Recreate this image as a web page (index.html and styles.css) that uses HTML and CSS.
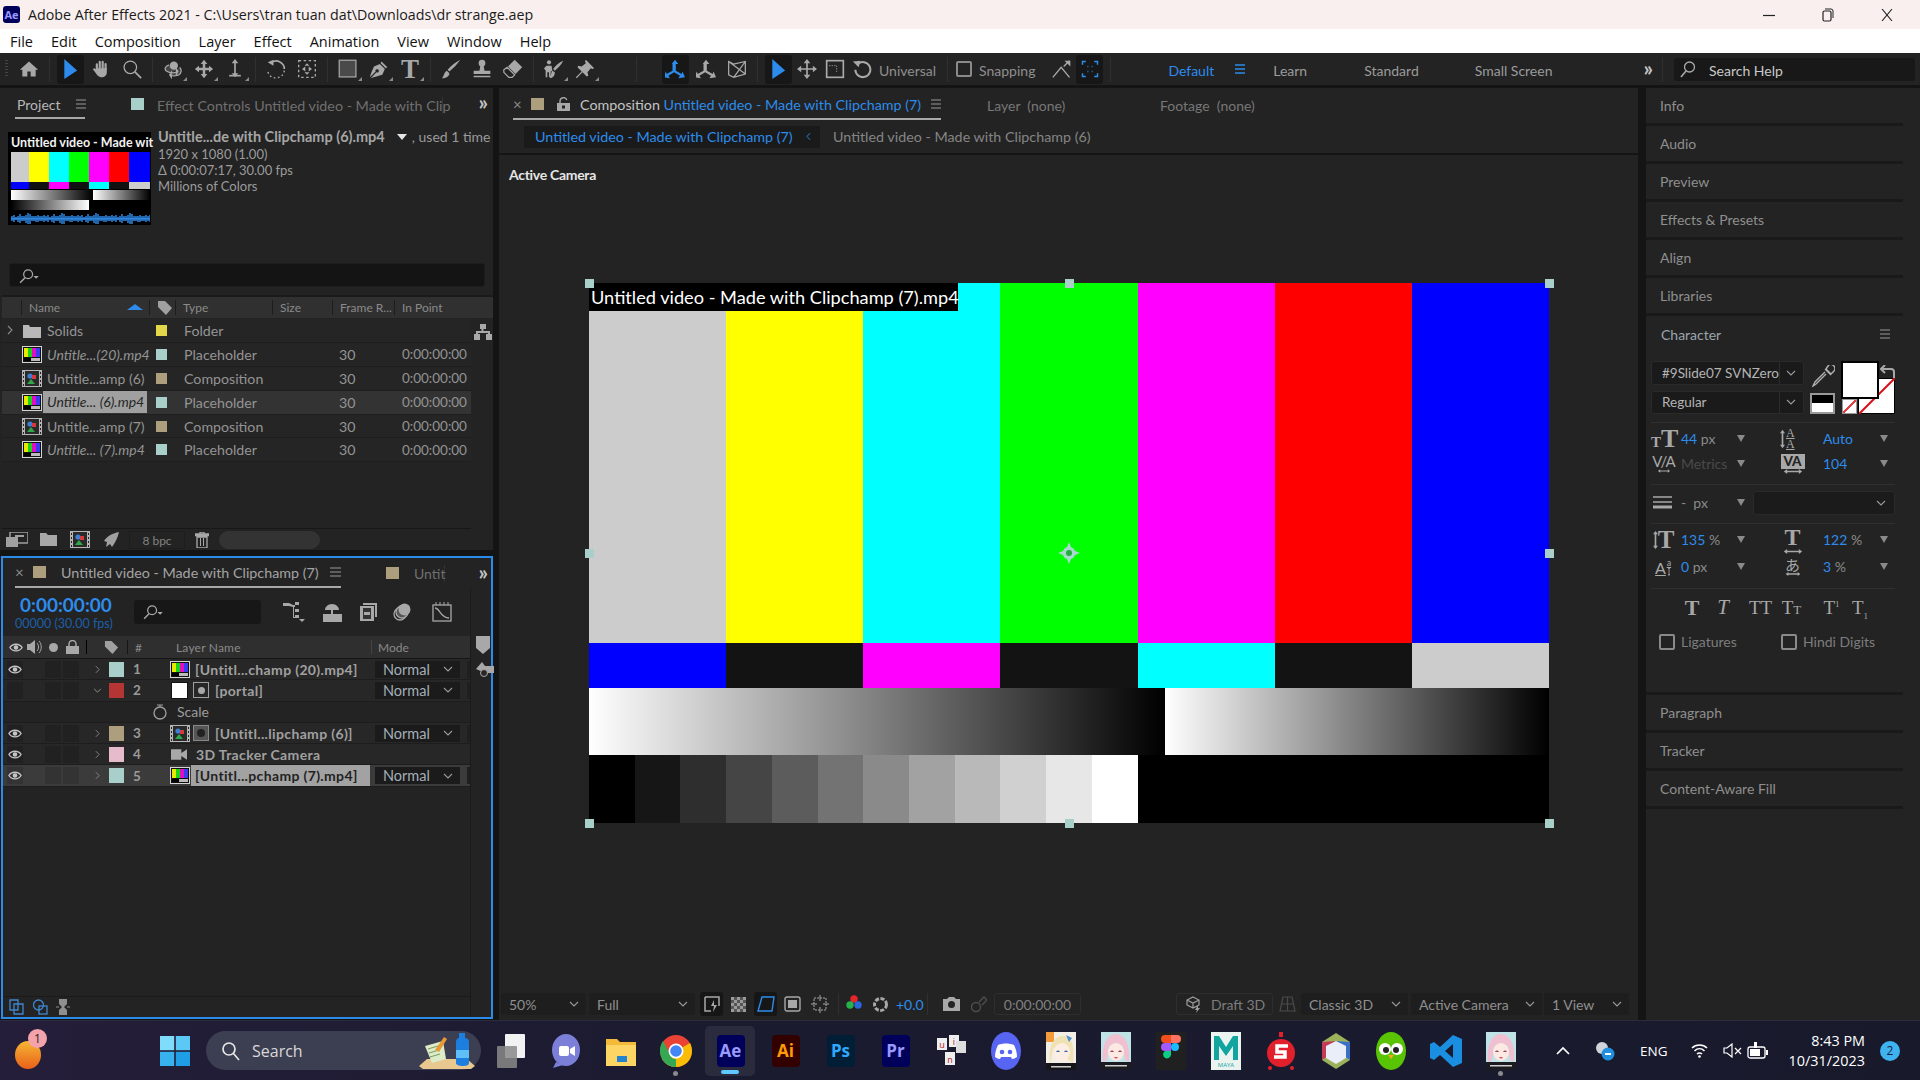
FILE: index.html
```html
<!DOCTYPE html>
<html lang="en">
<head>
    <meta charset="UTF-8">
    <title>Adobe After Effects 2021</title>
    <link rel="stylesheet" href="styles.css">
</head>
<body>
<svg class="defs" width="0" height="0">
    <defs>
        <symbol id="film" viewBox="0 0 20 17">
            <rect width="20" height="17" fill="#d4d4d4"/>
            <rect x="1" y="1" width="18" height="15" fill="#111"/>
            <rect x="2" y="2" width="4" height="9" fill="#e8e800"/>
            <rect x="6" y="2" width="4" height="9" fill="#19d419"/>
            <rect x="10" y="2" width="4" height="9" fill="#e010c0"/>
            <rect x="14" y="2" width="4" height="9" fill="#3a3af0"/>
            <rect x="2" y="12" width="7" height="3" fill="#000"/>
            <rect x="9" y="12" width="9" height="3" fill="#bbb"/>
        </symbol>
        <symbol id="comp" viewBox="0 0 20 17">
            <rect width="20" height="17" fill="#b5b5b5"/>
            <rect x="3" y="1" width="14" height="15" fill="#2a2a2a"/>
            <path d="M1 2h1v2H1zM1 6h1v2H1zM1 10h1v2H1zM1 14h1v2H1zM18 2h1v2h-1zM18 6h1v2h-1zM18 10h1v2h-1zM18 14h1v2h-1z" fill="#222"/>
            <circle cx="8" cy="6" r="2.6" fill="#3d7fd8"/>
            <rect x="10" y="5" width="4" height="4" fill="#d83a3a"/>
            <path d="M5 14l4-5 4 5z" fill="#2fa84a"/>
        </symbol>
        <symbol id="eye" viewBox="0 0 16 12">
            <path d="M1 6c3-5 11-5 14 0-3 5-11 5-14 0z" fill="none" stroke="#c4c4c4" stroke-width="1.5"/>
            <circle cx="8" cy="6" r="2.6" fill="#c4c4c4"/>
        </symbol>
        <symbol id="loupe" viewBox="0 0 24 18">
            <circle cx="11" cy="7" r="5" fill="none" stroke="#aaa" stroke-width="1.4"/>
            <path d="M7.5 11L2 16.5" stroke="#aaa" stroke-width="1.6"/>
            <path d="M17 9h6l-3 3z" fill="#aaa"/>
        </symbol>
        <symbol id="down" viewBox="0 0 10 6">
            <path d="M1 1l4 4 4-4" fill="none" stroke="#9a9a9a" stroke-width="1.1"/>
        </symbol>
        <symbol id="rightc" viewBox="0 0 6 10">
            <path d="M1 1l4 4-4 4" fill="none" stroke="#8a8a8a" stroke-width="1.1"/>
        </symbol>
        <symbol id="harrow" viewBox="0 0 22 6">
            <path d="M0 3l4-3v2h14V0l4 3-4 3V4H4v2z" fill="#a8a8a8"/>
        </symbol>
        <symbol id="varrow" viewBox="0 0 6 22">
            <path d="M3 0l3 4H4v14h2l-3 4-3-4h2V4H0z" fill="#a8a8a8"/>
        </symbol>
        <symbol id="anime" viewBox="0 0 30 38">
            <rect width="30" height="38" fill="#bfe3e6"/>
            <rect y="30" width="30" height="8" fill="#1b1b20"/>
            <path d="M2 30C0 10 8 2 15 2s15 8 13 28l-4-2-2-14-7-3-7 3-2 14z" fill="#f0bfd0"/>
            <ellipse cx="15" cy="20" rx="8" ry="9" fill="#fbe9e2"/>
            <path d="M9 20c1-2 3-2 4 0zM17 20c1-2 3-2 4 0z" fill="#a0446e"/>
            <path d="M13 25c1 2 3 2 4 0z" fill="#d8567a"/>
            <rect x="4" y="33" width="22" height="1.5" fill="#cfcfcf"/>
        </symbol>
        <symbol id="anime2" viewBox="0 0 30 38">
            <rect width="30" height="38" fill="#f4efe6"/>
            <rect width="8" height="10" fill="#f39a3a"/>
            <rect y="31" width="30" height="7" fill="#15151a"/>
            <path d="M4 31C2 12 9 4 17 4s12 8 10 27l-5-3-1-12-8-3-6 4-2 12z" fill="#f0e2b4"/>
            <ellipse cx="16" cy="20" rx="8" ry="9" fill="#fdeee4"/>
            <path d="M10 20c1-2 3-2 4 0zM18 20c1-2 3-2 4 0z" fill="#3f6ea8"/>
            <path d="M20 3l6 3-3 4z" fill="#4a8fd0"/>
            <rect x="5" y="34" width="20" height="1.500" fill="#cfcfcf"/>
        </symbol>
    </defs>
</svg>

<div class="titlebar">
    <span class="app-badge">Ae</span>
    <span class="title-text">Adobe After Effects 2021 - C:\Users\tran tuan dat\Downloads\dr strange.aep</span>
    <div class="win-btns">
        <svg width="12" height="12" viewBox="0 0 12 12"><path d="M0 6.5h12" stroke="#222" stroke-width="1.2"/></svg>
        <svg width="12" height="14" viewBox="0 0 12 14"><rect x="1" y="3" width="8" height="10" rx="1.5" fill="none" stroke="#222" stroke-width="1.2"/><path d="M3 1h6a2 2 0 0 1 2 2v7" fill="none" stroke="#222"/></svg>
        <svg width="12" height="12" viewBox="0 0 12 12"><path d="M1 0l10 12M11 0L1 12" stroke="#222" stroke-width="1.1"/></svg>
    </div>
</div>

<nav class="menubar">
    <span>File</span><span>Edit</span><span>Composition</span><span>Layer</span><span>Effect</span><span>Animation</span><span>View</span><span>Window</span><span>Help</span>
</nav>

<div class="toolbar">
    <span class="grip"></span>
    <span class="tool"><svg viewBox="0 0 24 24"><path d="M12 3L1 13h3v8h6v-6h4v6h6v-8h3z"/></svg></span>
    <i class="sep"></i>
    <span class="tool on"><svg viewBox="0 0 24 28"><path d="M4 0l18 16L4 28z" class="blue"/></svg></span>
    <span class="tool"><svg viewBox="0 0 24 24"><path d="M7 13V6.5M10.5 11V3.5M14 11V3.5M17.5 12V6" stroke="#aaa" stroke-width="2.6" stroke-linecap="round" fill="none"/><path d="M6 11h13v5c0 4-3 6-6 6-4 0-6-3-8-6l-3-4 2-1 3 2z"/></svg></span>
    <span class="tool"><svg viewBox="0 0 24 24"><circle cx="10" cy="10" r="7.5" fill="none" stroke="#aaa" stroke-width="1.5"/><path d="M15.5 15.5L23 23" stroke="#aaa" stroke-width="2"/></svg></span>
    <i class="sep"></i>
    <span class="tool more"><svg viewBox="0 0 24 24"><circle cx="13" cy="8" r="5"/><path d="M7 7C2 9 1 13 5 15c3 2 9 2 13 0M18 15l-2-3v6zM20 10c3 3 2 7-1 9-3 1-8 2-11 0M8 19l2-3v6z" stroke="#aaa" stroke-width="1.5" fill="#aaa" fill-opacity=".25"/></svg></span>
    <span class="tool more"><svg viewBox="0 0 24 24"><path d="M12 1l4 5h-2.500v4.500H18V8l5 4-5 4v-2.500h-4.500V18H16l-4 5-4-5h2.500v-4.500H6V16l-5-4 5-4v2.500h4.500V6H8z"/></svg></span>
    <span class="tool more"><svg viewBox="0 0 24 24"><path d="M12 0l4 5h-3v12h3l-4 5-4-5h3V5H8z"/><path d="M5 19h14v2H5z"/></svg></span>
    <i class="sep"></i>
    <span class="tool"><svg viewBox="0 0 24 24"><path d="M7 4c6-4 15 0 15 8" fill="none" stroke="#aaa" stroke-width="2"/><path d="M2 4l7-3v7z"/><path d="M22 14c-1 7-8 10-14 8-3-1-5-4-6-7" fill="none" stroke="#aaa" stroke-width="1.6" stroke-dasharray="2 3"/></svg></span>
    <span class="tool"><svg viewBox="0 0 24 24"><path d="M2 2h20v20H2z" fill="none" stroke="#aaa" stroke-width="1.6" stroke-dasharray="3 3"/><path d="M6 12l4-3v6zM18 12l-4-3v6zM12 5l3 3H9zM12 19l3-3H9z"/></svg></span>
    <i class="sep"></i>
    <span class="tool more"><svg viewBox="0 0 24 24"><rect x="1.500" y="1.500" width="20" height="20" fill="#4a4a4a" stroke="#a0a0a0" stroke-width="1.600"/></svg></span>
    <span class="tool more"><svg viewBox="0 0 24 24"><path d="M15 3l7 7-2 1-6-6zM13 6l6 6-3 7c-4 1-10 3-14 4l7-7a2 2 0 1 0-1-1l-7 7c1-4 3-9 5-13z"/></svg></span>
    <span class="tool more serif-t">T</span>
    <i class="sep"></i>
    <span class="tool"><svg viewBox="0 0 24 24"><path d="M23 1C20 6 15 11 10 15l-2-2C12 8 18 4 23 1zM7 14l3 3c0 4-4 6-9 6 3-2 2-7 6-9z"/></svg></span>
    <span class="tool"><svg viewBox="0 0 24 24"><circle cx="12" cy="5" r="4"/><path d="M10 8h4l1 6h7v4H2v-4h7zM2 20h20v2H2z"/></svg></span>
    <span class="tool"><svg viewBox="0 0 24 24"><path d="M14 1l9 9-8 8-9-9z"/><path d="M5 10l9 9-3 3H7l-6-6v-3z" fill="none" stroke="#aaa" stroke-width="1.500"/></svg></span>
    <i class="sep"></i>
    <span class="tool more"><svg viewBox="0 0 24 24"><circle cx="6" cy="4" r="2.500"/><path d="M3 8h6l1 6-2 1v7H6v-6H4v6H2v-8L0 11zM23 2c-2 5-7 9-10 12l-2-2c3-4 7-8 12-10zM10 14l3 2c0 4-2 7-6 7 2-2 1-7 3-9z"/></svg></span>
    <span class="tool more"><svg viewBox="0 0 24 24"><path d="M13 1l10 10-2 1-2-1-4 5 1 4-2 1-5-5-7 7-1-1 7-7-5-5 1-2 4 1 5-4-1-2z"/></svg></span>
    <i class="sep far"></i>
    <span class="tool on"><svg viewBox="0 0 24 24"><path d="M12 1l4 5h-3v8l7 4 1-3 3 7-8 1 2-3-7-4-7 4 2 3-8-1 3-7 1 3 7-4V6H8z" class="blue"/></svg></span>
    <span class="tool"><svg viewBox="0 0 24 24"><path d="M12 1l4 5h-3v8l7 4 1-3 3 7-8 1 2-3-7-4-7 4 2 3-8-1 3-7 1 3 7-4V6H8z"/></svg></span>
    <span class="tool"><svg viewBox="0 0 24 24"><path d="M2 3l6 3 14-3v15l-14 4-6-3zM2 3l20 15M8 22L22 3" fill="none" stroke="#aaa" stroke-width="1.500"/></svg></span>
    <i class="sep"></i>
    <span class="tool on"><svg viewBox="0 0 24 28"><path d="M4 0l18 16L4 28z" class="blue"/></svg></span>
    <span class="tool tight"><svg viewBox="0 0 24 24"><path d="M12 0l4 5h-3v6h6V8l5 4-5 4v-3h-6v6h3l-4 5-4-5h3v-6H5v3l-5-4 5-4v3h6V5H8z"/></svg></span>
    <span class="tool tight"><svg viewBox="0 0 24 24"><rect x="2" y="2" width="20" height="20" fill="none" stroke="#aaa" stroke-width="2"/><path d="M5 8h9v8" fill="none" stroke="#aaa" stroke-width="1" stroke-dasharray="1.500 1.500"/></svg></span>
    <span class="tool tight"><svg viewBox="0 0 24 24"><path d="M7 6a9 9 0 1 1-3 7" fill="none" stroke="#aaa" stroke-width="2.400"/><path d="M1 3l9-1-2 8z"/></svg></span>
    <span class="tool-label uni">Universal</span>
    <i class="sep"></i>
    <span class="check"></span>
    <span class="tool-label">Snapping</span>
    <span class="tool snap"><svg viewBox="0 0 24 24"><path d="M1 22L11 10l10 12M14 9l7-7" fill="none" stroke="#aaa" stroke-width="1.600"/><path d="M15 2h7v7z"/></svg></span>
    <span class="tool on"><svg viewBox="0 0 24 24"><path d="M3 7V3h4M17 3h4v4M21 17v4h-4M7 21H3v-4M9 9h1M14 9h1M9 15h1M14 15h1" fill="none" stroke="#2d8ceb" stroke-width="1.800"/></svg></span>
    <i class="sep"></i>
    <div class="workspaces">
        <span class="ws blue-text">Default</span>
        <svg class="ws-menu" width="10" height="10" viewBox="0 0 10 10"><path d="M0 1h10M0 5h10M0 9h10" stroke="#2d8ceb" stroke-width="1.300"/></svg>
        <span class="ws learn">Learn</span>
        <span class="ws standard">Standard</span>
        <span class="ws small">Small Screen</span>
    </div>
    <span class="chevs">»</span>
    <i class="sep last"></i>
    <div class="help-search">
        <svg width="18" height="18" viewBox="0 0 18 18"><circle cx="10.500" cy="7" r="5" fill="none" stroke="#aaa" stroke-width="1.300"/><path d="M7 11l-5 6" stroke="#aaa" stroke-width="1.600"/></svg>
        <span>Search Help</span>
    </div>
</div>

<div class="workspace">
    <div class="left-col">
        <section class="panel project">
            <div class="tabs">
                <div class="tab active"><span>Project</span><svg class="burger" width="10" height="10" viewBox="0 0 10 10"><path d="M0 1h10M0 5h10M0 9h10" stroke="#9a9a9a" stroke-width="1.200"/></svg></div>
                <span class="swatch teal"></span>
                <span class="tab-dim">Effect Controls Untitled video - Made with Clip</span>
                <span class="chevs">»</span>
            </div>
            <div class="proj-info">
                <div class="thumb">
                    <span class="thumb-title">Untitled video - Made wit</span>
                    <svg class="thumb-pic" viewBox="0 0 139 73" preserveAspectRatio="none">
                        <defs>
                            <linearGradient id="ga"><stop offset="0" stop-color="#fff"/><stop offset="1" stop-color="#000"/></linearGradient>
                            <linearGradient id="gb"><stop offset="0" stop-color="#000"/><stop offset="1" stop-color="#fff"/></linearGradient>
                            <pattern id="wave" y="61" width="34" height="11" patternUnits="userSpaceOnUse">
                                <path d="M0 5h34v1.500H0z" fill="#2d86e0"/>
                                <path d="M1 3v5M3 2v7M5 4v3M7 3v6M9 1v9M11 3v5M13 3v5M15 2v8M17 0v11M19 1v10M21 3v5M23 3v5M25 3v6M27 2v7M29 3v5M31 3v5M33 2v7" stroke="#2d86e0" stroke-width="1.500"/>
                            </pattern>
                        </defs>
                        <rect width="18" height="30" fill="#ccc"/><rect x="18" width="20" height="30" fill="#ff0"/><rect x="38" width="20" height="30" fill="#0ff"/><rect x="58" width="20" height="30" fill="#0f0"/><rect x="78" width="20" height="30" fill="#f0f"/><rect x="98" width="20" height="30" fill="#f00"/><rect x="118" width="21" height="30" fill="#00f"/>
                        <rect y="30" width="18" height="7" fill="#00f"/><rect x="18" y="30" width="20" height="7" fill="#111"/><rect x="38" y="30" width="20" height="7" fill="#f0f"/><rect x="58" y="30" width="20" height="7" fill="#111"/><rect x="78" y="30" width="20" height="7" fill="#0ff"/><rect x="98" y="30" width="20" height="7" fill="#111"/><rect x="118" y="30" width="21" height="7" fill="#ccc"/>
                        <rect y="38" width="81" height="10" fill="url(#ga)"/><rect x="82" y="38" width="57" height="10" fill="url(#ga)"/>
                        <rect y="48" width="78" height="10" fill="url(#gb)"/>
                        <rect y="61" width="139" height="11" fill="url(#wave)"/>
                    </svg>
                </div>
                <div class="file-info">
                    <div class="file-name"><b>Untitle...de with Clipchamp (6).mp4</b><i class="tri"></i><span>, used 1 time</span></div>
                    <div>1920 x 1080 (1.00)</div>
                    <div>Δ 0:00:07:17, 30.00 fps</div>
                    <div>Millions of Colors</div>
                </div>
            </div>
            <div class="search-box"><svg width="22" height="16"><use href="#loupe"/></svg></div>
            <div class="proj-head">
                <span></span>
                <span class="name-col">Name<i class="sort"></i></span>
                <span><svg width="16" height="16" viewBox="0 0 16 16"><path d="M1 1h7l7 7-6 7-8-8z" fill="#a0a0a0"/></svg></span>
                <span>Type</span><span>Size</span><span>Frame R...</span><span>In Point</span>
            </div>
            <div class="proj-body">
                <div class="proj-rows">
                    <div class="proj-row">
                        <svg class="chev" width="6" height="10"><use href="#rightc"/></svg>
                        <svg width="20" height="15" viewBox="0 0 20 15"><path d="M1 2h6l1 2h11v11H1z" fill="#b8b8b8"/></svg>
                        <span class="name">Solids</span><i class="lab yellow"></i><span>Folder</span><span></span><span></span>
                    </div>
                    <div class="proj-row">
                        <span></span><svg width="20" height="17"><use href="#film"/></svg>
                        <em class="name">Untitle...(20).mp4</em><i class="lab teal"></i><span>Placeholder</span><span>30</span><span class="tc">0:00:00:00</span>
                    </div>
                    <div class="proj-row">
                        <span></span><svg width="20" height="17"><use href="#comp"/></svg>
                        <span class="name">Untitle...amp (6)</span><i class="lab tan"></i><span>Composition</span><span>30</span><span class="tc">0:00:00:00</span>
                    </div>
                    <div class="proj-row selected">
                        <span></span><svg width="20" height="17"><use href="#film"/></svg>
                        <em class="name">Untitle... (6).mp4</em><i class="lab teal"></i><span>Placeholder</span><span>30</span><span class="tc">0:00:00:00</span>
                    </div>
                    <div class="proj-row">
                        <span></span><svg width="20" height="17"><use href="#comp"/></svg>
                        <span class="name">Untitle...amp (7)</span><i class="lab tan"></i><span>Composition</span><span>30</span><span class="tc">0:00:00:00</span>
                    </div>
                    <div class="proj-row">
                        <span></span><svg width="20" height="17"><use href="#film"/></svg>
                        <em class="name">Untitle... (7).mp4</em><i class="lab teal"></i><span>Placeholder</span><span>30</span><span class="tc">0:00:00:00</span>
                    </div>
                </div>
                <svg class="flow-icon" width="18" height="16" viewBox="0 0 18 16"><path d="M6 0h6v5H9.500v2H16v3h2v6h-6v-6h2V9H4v1h2v6H0v-6h2V7h5.500V5H6z" fill="#a8a8a8"/></svg>
            </div>
            <div class="proj-foot">
                <svg width="22" height="15" viewBox="0 0 22 15"><rect x="4" y="0" width="18" height="11" rx="1" fill="none" stroke="#a0a0a0" stroke-width="1.500"/><rect x="0" y="5" width="12" height="10" fill="#a0a0a0"/><rect x="9" y="3" width="9" height="2" fill="#a0a0a0"/></svg>
                <svg width="17" height="13" viewBox="0 0 17 13"><path d="M0 0h6l2 2h9v11H0z" fill="#a8a8a8"/></svg>
                <svg width="22" height="17"><use href="#comp"/></svg>
                <svg width="16" height="16" viewBox="0 0 16 16"><path d="M16 0C10 1 4 4 1 9l3 1-1 5 4-3 2 3C12 11 15 5 16 0z" fill="#a0a0a0"/></svg>
                <span class="bpc">8 bpc</span>
                <svg width="14" height="16" viewBox="0 0 14 16"><path d="M0 2h14v1.500H0zM5 0h4v2H5zM2 5h10v11H2z" fill="none" stroke="#a8a8a8" stroke-width="1.300"/><path d="M5.500 6v8M8.500 6v8" stroke="#a8a8a8"/></svg>
                <span class="thumb-bar"></span>
            </div>
        </section>

        <section class="panel timeline">
            <div class="tl-tabs">
                <div class="tl-tab">
                    <span class="close">×</span><span class="swatch tan"></span>
                    <span class="tl-title">Untitled video - Made with Clipchamp (7)</span>
                    <svg class="burger" width="11" height="10" viewBox="0 0 11 10"><path d="M0 1h11M0 5h11M0 9h11" stroke="#9a9a9a" stroke-width="1.200"/></svg>
                </div>
                <span class="swatch tan second"></span>
                <span class="tl-other">Untit</span>
                <span class="chevs">»</span>
            </div>
            <div class="tl-main">
                <div class="tl-left">
                    <div class="tl-controls">
                        <div class="timecode"><strong>0:00:00:00</strong><span>00000 (30.00 fps)</span></div>
                        <div class="tl-search"><svg width="22" height="16"><use href="#loupe"/></svg></div>
                        <div class="tl-icons">
                            <svg width="23" height="22" viewBox="0 0 23 22"><path d="M0 2h6l4 2h2v2h-2L6 5H0zM12 1h4v3h-4zM12 8h4v3h-4zM12 14h4v3h-4zM10 4h1v12h1v1h-2zM16 18h6l-3 3z" fill="#a8a8a8"/></svg>
                            <svg width="21" height="19" viewBox="0 0 21 19"><path d="M10 1c4 0 7 3 7 6H3c0-3 3-6 7-6zM9 7h2v4H9zM1 11h19v8H1z" fill="#a8a8a8"/></svg>
                            <svg width="18" height="18" viewBox="0 0 18 18"><path d="M4 0h14v14h-2V2H4zM1 3h14v15H1z" fill="#a8a8a8"/><path d="M4 5h8v11H4z" fill="#333"/><path d="M5 9h6v3H5z" fill="#a8a8a8"/></svg>
                            <svg width="18" height="18" viewBox="0 0 18 18"><circle cx="7" cy="11" r="6" fill="none" stroke="#a8a8a8" stroke-width="1.300"/><circle cx="9" cy="9" r="6" fill="#555" stroke="#a8a8a8" stroke-width="1.300"/><circle cx="11.500" cy="6.500" r="6" fill="#a8a8a8"/></svg>
                            <svg class="graph-ic" width="20" height="20" viewBox="0 0 20 20"><rect x="1" y="3" width="18" height="16" fill="none" stroke="#a8a8a8" stroke-width="1.300"/><path d="M3 6c5 0 5 10 14 10" fill="none" stroke="#a8a8a8" stroke-width="1.300"/><path d="M4 0v3M8 0v3M12 0v3M16 0v3" stroke="#a8a8a8"/></svg>
                        </div>
                    </div>
                    <div class="tl-head">
                        <svg class="h-eye" width="14" height="11"><use href="#eye"/></svg>
                        <svg class="h-audio" width="15" height="14" viewBox="0 0 15 14"><path d="M0 4h3l5-4v14l-5-4H0z" fill="#a8a8a8"/><path d="M10 3c2 2 2 6 0 8M12 1c3 3 3 9 0 12" fill="none" stroke="#a8a8a8"/></svg>
                        <i class="h-dot"></i>
                        <svg class="h-lock" width="13" height="14" viewBox="0 0 13 14"><path d="M3 6V4a3.500 3.500 0 0 1 7 0v2" fill="none" stroke="#a8a8a8" stroke-width="1.500"/><rect y="6" width="13" height="8" fill="#a8a8a8"/></svg>
                        <i class="h-sep s1"></i>
                        <svg class="h-tag" width="15" height="15" viewBox="0 0 16 16"><path d="M1 1h7l7 7-6 7-8-8z" fill="#a0a0a0"/></svg>
                        <i class="h-sep s2"></i>
                        <span class="h-num">#</span>
                        <i class="h-sep s3"></i>
                        <span class="h-name">Layer Name</span>
                        <i class="h-sep s4"></i>
                        <span class="h-mode">Mode</span>
                    </div>
                    <div class="layer">
                        <span class="cell eye"><svg width="14" height="11"><use href="#eye"/></svg></span><span class="cell solo"></span><span class="cell lock"></span>
                        <svg class="twirl" width="5" height="9"><use href="#rightc"/></svg><i class="label-box teal"></i><b class="num">1</b>
                        <svg class="src" width="20" height="17"><use href="#film"/></svg>
                        <b class="lname">[Untitl...champ (20).mp4]</b>
                        <span class="mode">Normal<svg width="10" height="6"><use href="#down"/></svg></span><span class="mini"></span>
                    </div>
                    <div class="layer">
                        <span class="cell eye"></span><span class="cell solo"></span><span class="cell lock"></span>
                        <svg class="twirl open" width="9" height="5"><use href="#down"/></svg><i class="label-box red"></i><b class="num">2</b>
                        <span class="solid-box"></span><span class="fx-box"><i></i></span>
                        <b class="lname boxed">[portal]</b>
                        <span class="mode">Normal<svg width="10" height="6"><use href="#down"/></svg></span><span class="mini"></span>
                    </div>
                    <div class="layer prop">
                        <svg class="stopwatch" width="14" height="16" viewBox="0 0 14 16"><circle cx="7" cy="9" r="6" fill="none" stroke="#a0a0a0" stroke-width="1.300"/><path d="M4 1h6M7 1v2" stroke="#a0a0a0"/></svg>
                        <span class="pname">Scale</span>
                    </div>
                    <div class="layer">
                        <span class="cell eye"><svg width="14" height="11"><use href="#eye"/></svg></span><span class="cell solo"></span><span class="cell lock"></span>
                        <svg class="twirl" width="5" height="9"><use href="#rightc"/></svg><i class="label-box tan"></i><b class="num">3</b>
                        <svg class="src" width="20" height="17"><use href="#comp"/></svg><span class="fx-box dark"><i></i></span>
                        <b class="lname boxed">[Untitl...lipchamp (6)]</b>
                        <span class="mode">Normal<svg width="10" height="6"><use href="#down"/></svg></span><span class="mini"></span>
                    </div>
                    <div class="layer">
                        <span class="cell eye"><svg width="14" height="11"><use href="#eye"/></svg></span><span class="cell solo"></span><span class="cell lock"></span>
                        <svg class="twirl" width="5" height="9"><use href="#rightc"/></svg><i class="label-box pink"></i><b class="num">4</b>
                        <svg class="src cam" width="16" height="13" viewBox="0 0 17 13"><path d="M0 1h11v11H0zM11 5l6-4v11l-6-4z" fill="#a8a8a8"/></svg>
                        <b class="lname">3D Tracker Camera</b>
                    </div>
                    <div class="layer selected">
                        <span class="cell eye"><svg width="14" height="11"><use href="#eye"/></svg></span><span class="cell solo"></span><span class="cell lock"></span>
                        <svg class="twirl" width="5" height="9"><use href="#rightc"/></svg><i class="label-box teal"></i><b class="num">5</b>
                        <svg class="src" width="20" height="17"><use href="#film"/></svg>
                        <b class="lname">[Untitl...pchamp (7).mp4]</b>
                        <span class="mode">Normal<svg width="10" height="6"><use href="#down"/></svg></span><span class="mini"></span>
                    </div>
                    <div class="tl-empty"></div>
                    <div class="tl-foot">
                        <svg width="15" height="16" viewBox="0 0 15 16"><path d="M1 1h8v10H1zM5 5h9v10H5z" fill="none" stroke="#3f86cf" stroke-width="1.300"/></svg>
                        <svg width="16" height="16" viewBox="0 0 16 16"><circle cx="6.500" cy="6" r="5" fill="none" stroke="#3f86cf" stroke-width="1.300"/><rect x="7" y="7" width="8" height="8" fill="none" stroke="#3f86cf" stroke-width="1.300"/></svg>
                        <svg width="14" height="16" viewBox="0 0 14 16"><path d="M3 0h8v5l-3 3 3 3v5H3v-5l3-3-3-3z" fill="#8f8f8f"/><path d="M0 8h3M11 8h3" stroke="#8f8f8f"/></svg>
                    </div>
                </div>
                <div class="tl-strip">
                    <svg width="14" height="18" viewBox="0 0 14 18"><path d="M0 0h14v12l-7 6-7-6z" fill="#a8a8a8"/></svg>
                    <svg class="strip-2" width="18" height="17" viewBox="0 0 18 17"><path d="M0 8l6-7 3 4h9v7H9z" fill="#a8a8a8"/><circle cx="8" cy="12" r="3.500" fill="#272727" stroke="#a8a8a8"/></svg>
                </div>
            </div>
        </section>
    </div>

    <section class="panel comp">
        <div class="comp-tabs">
            <div class="comp-tab">
                <span class="close">×</span><span class="swatch tan"></span>
                <svg class="lock-ic" width="13" height="14" viewBox="0 0 13 14"><path d="M3 6V4a3.500 3.500 0 0 1 6.800-1" fill="none" stroke="#a8a8a8" stroke-width="1.400"/><rect y="6" width="13" height="8" fill="#a8a8a8"/><rect x="5" y="8.500" width="3" height="3" fill="#232323"/></svg>
                <span class="ct-label">Composition <span class="blue-text">Untitled video - Made with Clipchamp (7)</span></span>
                <svg class="burger" width="10" height="10" viewBox="0 0 10 10"><path d="M0 1h10M0 5h10M0 9h10" stroke="#9a9a9a" stroke-width="1.200"/></svg>
            </div>
            <span class="ct-dim layer-tab">Layer&nbsp; (none)</span>
            <span class="ct-dim">Footage&nbsp; (none)</span>
        </div>
        <div class="crumbs">
            <span class="crumb active">Untitled video - Made with Clipchamp (7)<svg width="5" height="9" viewBox="0 0 6 10"><path d="M5 1L1 5l4 4" fill="none" stroke="#2d8ceb" stroke-width="1.100"/></svg></span>
            <span class="crumb">Untitled video - Made with Clipchamp (6)</span>
        </div>
        <div class="viewer">
            <span class="view-label">Active Camera</span>
            <div class="video">
                <div class="bars-top">
                    <i class="c-gray"></i><i class="c-yellow"></i><i class="c-cyan"></i><i class="c-green"></i><i class="c-magenta"></i><i class="c-red"></i><i class="c-blue"></i>
                </div>
                <div class="bars-mid">
                    <i class="c-blue"></i><i class="c-black"></i><i class="c-magenta"></i><i class="c-black"></i><i class="c-cyan"></i><i class="c-black"></i><i class="c-gray"></i>
                </div>
                <div class="ramps"><i class="ramp-a"></i><i class="ramp-b"></i></div>
                <div class="steps">
                    <i class="s1"></i><i class="s2"></i><i class="s3"></i><i class="s4"></i><i class="s5"></i><i class="s6"></i><i class="s7"></i><i class="s8"></i><i class="s9"></i><i class="s10"></i><i class="s11"></i><i class="s12"></i>
                </div>
                <span class="video-title">Untitled video - Made with Clipchamp (7).mp4</span>
                <i class="handle tl"></i><i class="handle tc"></i><i class="handle tr"></i>
                <i class="handle ml"></i><i class="handle mr"></i>
                <i class="handle bl"></i><i class="handle bc"></i><i class="handle br"></i>
                <svg class="anchor" width="22" height="22" viewBox="0 0 22 22"><path d="M11 0l2 5a6 6 0 0 1 4 4l5 2-5 2a6 6 0 0 1-4 4l-2 5-2-5a6 6 0 0 1-4-4l-5-2 5-2a6 6 0 0 1 4-4z" fill="#a8d8cf"/><circle cx="11" cy="11" r="3" fill="#1fae3a"/></svg>
            </div>
        </div>
        <div class="comp-foot">
            <span class="drop w-zoom">50%<svg width="10" height="6"><use href="#down"/></svg></span>
            <span class="drop w-res">Full<svg width="10" height="6"><use href="#down"/></svg></span>
            <span class="vbtn on"><svg width="16" height="17" viewBox="0 0 16 17"><path d="M1 1h14v9M1 1v14h6" fill="none" stroke="#a8a8a8" stroke-width="1.500"/><path d="M10 4l-3 6h3l-1 6 4-7h-3z" fill="#a8a8a8"/></svg></span>
            <span class="vbtn"><svg width="15" height="15" viewBox="0 0 15 15"><rect width="15" height="15" fill="#555"/><path d="M0 0h3v3H0zM6 0h3v3H6zM12 0h3v3h-3zM3 3h3v3H3zM9 3h3v3H9zM0 6h3v3H0zM6 6h3v3H6zM12 6h3v3h-3zM3 9h3v3H3zM9 9h3v3H9zM0 12h3v3H0zM6 12h3v3H6zM12 12h3v3h-3z" fill="#9a9a9a"/></svg></span>
            <span class="vbtn on"><svg width="18" height="18" viewBox="0 0 18 18"><path d="M5 2h12l-2 14H1z" fill="none" stroke="#2d8ceb" stroke-width="1.400"/></svg></span>
            <span class="vbtn"><svg width="17" height="16" viewBox="0 0 17 16"><rect x="1" y="1" width="15" height="14" rx="2" fill="none" stroke="#a8a8a8" stroke-width="1.400"/><rect x="4" y="4" width="9" height="8" fill="#a8a8a8"/></svg></span>
            <span class="vbtn"><svg width="18" height="18" viewBox="0 0 18 18"><rect x="3" y="3" width="12" height="12" fill="none" stroke="#a8a8a8" stroke-dasharray="2 1"/><path d="M9 0v6M9 12v6M0 9h6M12 9h6" stroke="#a8a8a8"/></svg></span>
            <i class="fsep"></i>
            <span class="vbtn"><svg width="16" height="18" viewBox="0 0 16 18"><circle cx="8" cy="4" r="3.700" fill="#e5262a"/><circle cx="4" cy="10" r="3.700" fill="#24b24a"/><circle cx="12" cy="10" r="3.700" fill="#2a66dc"/></svg></span>
            <span class="vbtn"><svg width="17" height="17" viewBox="0 0 17 17"><circle cx="8.500" cy="8.500" r="6" fill="none" stroke="#a8a8a8" stroke-width="3" stroke-dasharray="4 1.500"/><circle cx="8.500" cy="8.500" r="2.500" fill="#232323"/></svg></span>
            <span class="exposure blue-text">+0.0</span>
            <i class="fsep wide"></i>
            <span class="vbtn"><svg width="17" height="14" viewBox="0 0 17 14"><path d="M0 2h4l2-2h5l2 2h4v12H0z" fill="#a8a8a8"/><circle cx="8.500" cy="7.500" r="3.500" fill="#232323"/></svg></span>
            <span class="vbtn"><svg width="16" height="17" viewBox="0 0 16 17"><circle cx="5" cy="11" r="4.500" fill="none" stroke="#4d4d4d" stroke-width="1.500"/><path d="M8 6l5-5 3 3-5 5" fill="none" stroke="#4d4d4d" stroke-width="1.500"/></svg></span>
            <span class="tc-box">0:00:00:00</span>
            <span class="draft"><svg width="16" height="17" viewBox="0 0 16 17"><path d="M7 1l6 3v5l-6 3-6-3V4zM1 4l6 3 6-3M7 7v5" fill="none" stroke="#a0a0a0" stroke-width="1.200"/><path d="M12 9l-3 5h2l-1 3 4-5h-2z" fill="#a0a0a0"/></svg>Draft 3D</span>
            <svg class="floor" width="17" height="16" viewBox="0 0 17 16"><path d="M4 1h9l3 14H1zM8.500 1v14M2.500 8h12" fill="none" stroke="#4a4a4a" stroke-width="1.200"/></svg>
            <span class="drop w-3d">Classic 3D<svg width="10" height="6"><use href="#down"/></svg></span>
            <span class="drop w-cam">Active Camera<svg width="10" height="6"><use href="#down"/></svg></span>
            <span class="drop w-view">1 View<svg width="10" height="6"><use href="#down"/></svg></span>
        </div>
    </section>

    <aside class="panel side">
        <div class="side-item">Info</div>
        <div class="side-item">Audio</div>
        <div class="side-item">Preview</div>
        <div class="side-item">Effects &amp; Presets</div>
        <div class="side-item">Align</div>
        <div class="side-item">Libraries</div>
        <div class="char">
            <div class="char-title"><span>Character</span><svg width="10" height="10" viewBox="0 0 10 10"><path d="M0 1h10M0 5h10M0 9h10" stroke="#9a9a9a" stroke-width="1.200"/></svg></div>
            <div class="font-block">
                <div class="font-drops">
                    <div class="font-drop"><span>#9Slide07 SVNZero</span><i></i><svg width="10" height="6"><use href="#down"/></svg></div>
                    <div class="font-drop"><span>Regular</span><i></i><svg width="10" height="6"><use href="#down"/></svg></div>
                </div>
                <div class="color-tools">
                    <svg class="dropper" width="23" height="22" viewBox="0 0 23 22"><path d="M14 9L4 19 1 21l2-4L13 7M13 4l6 6M16 1a3 3 0 0 1 6 5l-3 3-5-5z" fill="none" stroke="#b0b0b0" stroke-width="1.400"/></svg>
                    <span class="mini-swap"><i></i></span>
                    <div class="fill-stroke">
                        <span class="stroke"></span>
                        <svg class="slash" width="36" height="36" viewBox="0 0 36 36"><path d="M0 36L36 0" stroke="#d8101c" stroke-width="2"/></svg>
                        <span class="fill"></span>
                        <svg class="swap" width="15" height="13" viewBox="0 0 15 13"><path d="M2 4h9a3 3 0 0 1 3 3v6M5 0L1 4l4 4" fill="none" stroke="#a8a8a8" stroke-width="2"/></svg>
                        <span class="none-box"></span>
                    </div>
                </div>
            </div>
            <div class="char-rows">
                <div class="cr">
                    <span class="t-ic big-small"><small>T</small>T</span><span class="v"><span class="blue-text">44</span> px</span><i class="tri g"></i>
                    <span class="t-ic col-2 leading"><svg width="5" height="20"><use href="#varrow"/></svg><span>A<br>A</span></span><span class="v r"><span class="blue-text">Auto</span></span><i class="tri g end"></i>
                </div>
                <div class="cr">
                    <span class="t-ic va stack">V/A<svg width="12" height="4"><use href="#harrow"/></svg></span><span class="v off">Metrics</span><i class="tri g"></i>
                    <span class="t-ic col-2 stack"><span class="va-box">VA</span><svg width="22" height="5"><use href="#harrow"/></svg></span><span class="v r"><span class="blue-text">104</span></span><i class="tri g end"></i>
                </div>
            </div>
            <div class="char-rows single">
                <div class="cr">
                    <svg class="stroke-ic" width="19" height="14" viewBox="0 0 19 14"><path d="M0 1h19M0 6h19" stroke="#a8a8a8" stroke-width="1.500"/><path d="M0 11h19" stroke="#a8a8a8" stroke-width="3"/></svg>
                    <span class="v">-&nbsp; px</span><i class="tri g"></i>
                    <span class="stroke-drop"><svg width="10" height="6"><use href="#down"/></svg></span>
                </div>
            </div>
            <div class="char-rows tall">
                <div class="cr">
                    <span class="t-ic vscale"><svg width="5" height="18"><use href="#varrow"/></svg>T</span><span class="v"><span class="blue-text">135</span> %</span><i class="tri g"></i>
                    <span class="t-ic col-2 stack hscale">T<svg width="22" height="5"><use href="#harrow"/></svg></span><span class="v r"><span class="blue-text">122</span> %</span><i class="tri g end"></i>
                </div>
                <div class="cr">
                    <span class="t-ic base"><u>A</u><span class="base-a"><u>a</u><svg width="6" height="9" viewBox="0 0 6 22"><use href="#varrow"/></svg></span></span><span class="v"><span class="blue-text">0</span> px</span><i class="tri g"></i>
                    <span class="t-ic col-2 stack tsume">あ<svg width="20" height="4"><use href="#harrow"/></svg></span><span class="v r"><span class="blue-text">3</span> %</span><i class="tri g end"></i>
                </div>
            </div>
            <div class="styles">
                <b>T</b><em>T</em><span>TT</span><span>T<small>T</small></span><span>T<sup>1</sup></span><span>T<sub>1</sub></span>
            </div>
            <div class="checks">
                <span class="check"></span><span class="ck-label">Ligatures</span>
                <span class="check second"></span><span class="ck-label">Hindi Digits</span>
            </div>
        </div>
        <div class="side-item">Paragraph</div>
        <div class="side-item">Tracker</div>
        <div class="side-item">Content-Aware Fill</div>
    </aside>
</div>

<footer class="taskbar">
    <div class="weather">
        <svg width="28" height="32" viewBox="0 0 28 32"><defs><linearGradient id="sun" x1="0" y1="0" x2="0" y2="1"><stop offset="0" stop-color="#f6b634"/><stop offset="1" stop-color="#e9601a"/></linearGradient></defs><ellipse cx="14" cy="18" rx="13" ry="14" fill="url(#sun)"/></svg>
        <span class="wx-badge">1</span>
    </div>
    <svg class="winlogo" width="30" height="30" viewBox="0 0 30 30"><rect width="14.200" height="14.200" fill="#7fdcfb"/><rect x="15.800" width="14.200" height="14.200" fill="#5cc8f6"/><rect y="15.800" width="14.200" height="14.200" fill="#38b2ef"/><rect x="15.800" y="15.800" width="14.200" height="14.200" fill="#1f9ee6"/></svg>
    <div class="search-pill">
        <svg width="20" height="20" viewBox="0 0 20 20"><circle cx="8" cy="8" r="6" fill="none" stroke="#e6e6e6" stroke-width="1.700"/><path d="M12.500 12.500L18 19" stroke="#e6e6e6" stroke-width="1.700"/></svg>
        <span>Search</span>
        <svg class="pill-art" width="56" height="38" viewBox="0 0 56 38"><path d="M0 34l8-7h40l8 7-4 3H4z" fill="#e8c88f"/><path d="M6 14l18-5 3 18-14 4z" fill="#dcecc8"/><path d="M9 17l10-3M10 21l10-3M11 25l10-3" stroke="#7a9a60"/><path d="M16 18l9-13 3 2-8 13z" fill="#e79a32"/><path d="M37 10c0-3 2-4 3-4V1h6v5c2 0 4 1 4 4v21c0 2-2 3-6 3s-7-1-7-3z" fill="#1c7fe0"/><path d="M37 18h13v8H37z" fill="#5fc0f8"/></svg>
    </div>
    <div class="apps">
        <span class="app"><svg width="32" height="34" viewBox="0 0 32 34"><rect x="10" y="0" width="20" height="24" rx="1" fill="#f2f2f2"/><rect x="2" y="12" width="20" height="22" rx="1" fill="#8a8a8a" opacity=".85"/></svg></span>
        <span class="app"><svg width="30" height="34" viewBox="0 0 30 34"><ellipse cx="15" cy="16" rx="14" ry="16" fill="#7b7fd8"/><path d="M5 28l-3 6 10-3z" fill="#7b7fd8"/><rect x="8" y="12" width="10" height="10" rx="2" fill="#fff"/><path d="M19 15l5-3v10l-5-3z" fill="#fff"/></svg></span>
        <span class="app"><svg width="32" height="30" viewBox="0 0 32 30"><path d="M1 3h11l3 3h16v24H1z" fill="#f3b93a"/><rect x="1" y="9" width="30" height="21" fill="#fcd565"/><rect x="12" y="20" width="10" height="6" fill="#2383cf"/></svg></span>
        <span class="app dotted"><svg width="32" height="32" viewBox="0 0 32 32"><circle cx="16" cy="16" r="16" fill="#ea4335"/><path d="M2 24L16 16l14-8c1 2 2 5 2 8 0 9-7 16-16 16C10 32 5 29 2 24z" fill="#fbbc05"/><path d="M16 32C7 32 0 25 0 16 0 12 1 9 3 6l9 17c2 1 3 1 4 1z" fill="#34a853"/><circle cx="16" cy="16" r="7.500" fill="#fff"/><circle cx="16" cy="16" r="5.800" fill="#4285f4"/></svg></span>
        <span class="app current"><span class="tile ae">Ae</span></span>
        <span class="app"><span class="tile ai">Ai</span></span>
        <span class="app"><span class="tile ps">Ps</span></span>
        <span class="app"><span class="tile pr">Pr</span></span>
        <span class="app"><svg width="30" height="32" viewBox="0 0 30 32"><rect x="1" y="3" width="10" height="12" fill="#eee"/><rect x="13" y="0" width="10" height="12" fill="#eee"/><rect x="20" y="6" width="10" height="12" fill="#ddd"/><rect x="9" y="17" width="10" height="13" fill="#eee"/><text x="6" y="13" class="key-glyph">u</text><text x="18" y="10" class="key-glyph">i</text><text x="14" y="28" class="key-glyph">n</text></svg></span>
        <span class="app"><svg width="30" height="38" viewBox="0 0 30 38"><ellipse cx="15" cy="19" rx="15" ry="19" fill="#5865f2"/><path d="M7 13c5-2 11-2 16 0 2 4 3 8 3 12-2 1-3 2-5 2l-1-2H10l-1 2c-2 0-3-1-5-2 0-4 1-8 3-12z" fill="#fff"/><circle cx="11" cy="20" r="2.300" fill="#5865f2"/><circle cx="19" cy="20" r="2.300" fill="#5865f2"/></svg></span>
        <span class="app"><svg width="30" height="38"><use href="#anime2"/></svg></span>
        <span class="app"><svg width="30" height="38"><use href="#anime"/></svg></span>
        <span class="app"><svg width="30" height="38" viewBox="0 0 30 38"><rect width="30" height="38" fill="#202020"/><path d="M9 3h6v8H9a4 4 0 0 1 0-8z" fill="#f24e1e"/><path d="M15 3h6a4 4 0 0 1 0 8h-6z" fill="#ff7262"/><path d="M9 11h6v8H9a4 4 0 0 1 0-8z" fill="#a259ff"/><circle cx="19" cy="15" r="4" fill="#1abcfe"/><path d="M9 19h6v4a4 4 0 1 1-6-4z" fill="#0acf83"/></svg></span>
        <span class="app"><svg width="30" height="38" viewBox="0 0 30 38"><rect width="30" height="38" fill="#eaf3f0"/><path d="M3 28V4h5l7 11 7-11h5v24h-5V14l-7 10-7-10v14z" fill="#12a5a0"/><text x="15" y="35" class="maya-text">MAYA</text></svg></span>
        <span class="app"><svg width="30" height="38" viewBox="0 0 30 38"><circle cx="15" cy="21" r="14" fill="#e2202c"/><rect x="13" y="0" width="4" height="5" fill="#e2202c"/><circle cx="4" cy="36" r="2" fill="#e2202c"/><circle cx="26" cy="36" r="2" fill="#e2202c"/><path d="M22 14H11v6h8v5H8" fill="none" stroke="#fff" stroke-width="3.500"/></svg></span>
        <span class="app"><svg width="30" height="38" viewBox="0 0 30 38"><path d="M15 1l14 9v18l-14 9-14-9V10z" fill="#9cb25a"/><path d="M15 9l14 1v18l-14-9z" fill="#3d6fc4"/><path d="M15 9L1 10v18l14-9z" fill="#c23c58"/><path d="M5 14l10-5 10 5v12l-10 6-10-6z" fill="#e9eef8"/></svg></span>
        <span class="app"><svg width="30" height="38" viewBox="0 0 30 38"><ellipse cx="15" cy="19" rx="15" ry="19" fill="#58c404"/><circle cx="9" cy="17" r="6" fill="#fff"/><circle cx="21" cy="17" r="6" fill="#fff"/><circle cx="10" cy="18" r="3" fill="#222"/><circle cx="20" cy="18" r="3" fill="#222"/><path d="M12 23h6l-3 4z" fill="#f5a623"/></svg></span>
        <span class="app"><svg width="32" height="32" viewBox="0 0 32 32"><path d="M23 0l9 4v24l-9 4-13-12-6 5-4-2V9l4-2 6 5zM23 9l-8 7 8 7z" fill="#1a8ee0"/></svg></span>
        <span class="app dotted"><svg width="30" height="38"><use href="#anime"/></svg></span>
    </div>
    <div class="tray">
        <svg class="tr-chev" width="14" height="9" viewBox="0 0 14 9"><path d="M1 8l6-6 6 6" fill="none" stroke="#fff" stroke-width="1.700"/></svg>
        <svg class="tr-cloud" width="20" height="20" viewBox="0 0 20 20"><circle cx="7" cy="7" r="6" fill="#cfd3da"/><circle cx="13" cy="13" r="6.500" fill="#1f8fe0"/><path d="M10 13h6" stroke="#fff" stroke-width="2"/></svg>
        <span class="tr-lang">ENG</span>
        <svg class="tr-wifi" width="17" height="15" viewBox="0 0 17 15"><path d="M1 5c4-4 11-4 15 0M3.500 8c3-3 7-3 10 0M6 11c1.500-1.500 3.500-1.500 5 0" fill="none" stroke="#fff" stroke-width="1.500"/><circle cx="8.500" cy="13.500" r="1.300" fill="#fff"/></svg>
        <svg class="tr-sound" width="19" height="15" viewBox="0 0 19 15"><path d="M1 5h3l5-4v13l-5-4H1z" fill="none" stroke="#fff" stroke-width="1.200"/><path d="M12 5l6 6M18 5l-6 6" stroke="#fff" stroke-width="1.200"/></svg>
        <svg class="tr-batt" width="21" height="18" viewBox="0 0 21 18"><rect x="1" y="5" width="17" height="11" rx="2" fill="none" stroke="#fff" stroke-width="1.300"/><rect x="3" y="7" width="10" height="7" fill="#fff"/><rect x="19" y="8" width="2" height="5" fill="#fff"/><path d="M7 0h3v6H7z" fill="#fff"/></svg>
        <div class="clock"><span>8:43 PM</span><span>10/31/2023</span></div>
        <span class="notif">2</span>
    </div>
</footer>
</body>
</html>
```

FILE: styles.css
```css
* {
    box-sizing: border-box;
}

html, body {
    margin: 0;
    height: 100%;
}

body {
    width: 1920px;
    height: 1080px;
    overflow: hidden;
    display: flex;
    flex-direction: column;
    font-family: "Lato", "Noto Sans", sans-serif;
    font-size: 14px;
    color: #9b9b9b;
    background: #141414;
}

.defs {
    position: absolute;
}

svg {
    display: block;
    flex-shrink: 0;
}

i {
    font-style: normal;
}

.blue-text {
    color: #2d8ceb;
}

.teal { background: #a9cfcb; }
.tan { background: #ad9e7d; }
.yellow { background: #e3d64a; }
.red { background: #b53535; }
.pink { background: #e6bccd; }

/* title + menu */
.titlebar {
    height: 29px;
    flex-shrink: 0;
    display: flex;
    align-items: center;
    padding-left: 3px;
    background: #f8efee;
    color: #1b1b1b;
    font-family: "Open Sans", sans-serif;
    font-size: 14.250px;
}

.app-badge {
    width: 17px;
    height: 17px;
    margin-right: 8px;
    border-radius: 3px;
    background: #00005b;
    color: #9a9aff;
    font: 700 11px "Open Sans", sans-serif;
    text-align: center;
    line-height: 17px;
}

.win-btns {
    margin-left: auto;
    display: flex;
    align-items: center;
    gap: 47px;
    padding-right: 27px;
}

.menubar {
    height: 24px;
    flex-shrink: 0;
    display: flex;
    align-items: center;
    gap: 18px;
    padding-left: 10px;
    background: #fff;
    color: #111;
    font-family: "Open Sans", sans-serif;
    font-size: 14.500px;
}

/* tool row */
.toolbar {
    height: 32px;
    flex-shrink: 0;
    display: flex;
    align-items: center;
    background: #232323;
}

.grip {
    width: 3px;
    height: 18px;
    margin-left: 5px;
    margin-right: 5.500px;
    background: repeating-linear-gradient(#444 0 1px, transparent 1px 3px);
}

.tool {
    position: relative;
    width: 31px;
    height: 29px;
    display: flex;
    align-items: center;
    justify-content: center;
    flex-shrink: 0;
}

.tool svg {
    width: 20px;
    height: 20px;
    fill: #a8a8a8;
}

.tool .blue {
    fill: #2d8ceb;
}

.tool.on::before {
    content: "";
    position: absolute;
    inset: 0 2px;
    background: #171717;
    border-radius: 3px;
}

.tool.on svg {
    position: relative;
}

.tool.tight {
    width: 27.500px;
}

.tool.more::after {
    content: "";
    position: absolute;
    right: 2px;
    bottom: 3px;
    border-style: solid;
    border-width: 0 0 4px 4px;
    border-color: transparent transparent #8a8a8a transparent;
}

.serif-t {
    font: 700 27px "Liberation Serif", serif;
    color: #a8a8a8;
}

.sep {
    width: 1px;
    height: 25px;
    margin: 0 4.500px;
    background: #303030;
    flex-shrink: 0;
}

.sep.far {
    margin-left: 35px;
    margin-right: 23px;
}

.sep.last {
    margin: 0 11px 0 9px;
}

.tool-label {
    margin: 2px 6px 0 7px;
    font-size: 14px;
    color: #8f8f8f;
}

.tool-label.uni {
    margin-left: 3px;
}

.check {
    width: 16px;
    height: 16px;
    margin-left: 4px;
    border: 2px solid #8a8a8a;
    border-radius: 2px;
    flex-shrink: 0;
}

.tool.snap {
    margin-left: 8px;
    width: 25px;
}

.workspaces {
    display: flex;
    align-items: center;
    margin-left: 53px;
    font-size: 14px;
}

.ws {
    margin-top: 2px;
}

.ws-menu {
    margin-left: 21px;
}

.learn { margin-left: 28px; }
.standard { margin-left: 57px; }
.small { margin-left: 56px; }

.chevs {
    color: #c4c4c4;
    font-size: 21px;
    font-weight: 700;
    line-height: 1;
    margin-left: auto;
    padding-bottom: 4px;
}

.toolbar .chevs {
    margin-left: 91px;
}

.help-search {
    width: 241px;
    height: 23px;
    display: flex;
    align-items: center;
    padding-left: 5px;
    background: #181818;
    border-radius: 3px;
    color: #c8c8c8;
}

.help-search span {
    margin: 2px 0 0 12px;
}

/* main area */
.workspace {
    flex: 1;
    min-height: 0;
    display: flex;
    padding-top: 3px;
    background: #141414;
}

.panel {
    background: #232323;
}

.left-col {
    width: 493px;
    display: flex;
    flex-direction: column;
    gap: 6px;
    flex-shrink: 0;
}

.project {
    height: 462px;
    display: flex;
    flex-direction: column;
}

.tabs {
    height: 31px;
    display: flex;
    align-items: center;
    flex-shrink: 0;
    padding: 0 5px 0 15px;
}

.tab.active {
    width: 70px;
    height: 31px;
    display: flex;
    align-items: center;
    padding: 3px 0 0 2px;
    border-bottom: 2px solid #a8a8a8;
    color: #b8b8b8;
}

.tab.active .burger {
    margin-left: 16px;
}

.swatch {
    width: 13px;
    height: 12px;
    flex-shrink: 0;
}

.tabs .swatch {
    margin-left: 46px;
}

.tab-dim {
    width: 286px;
    margin: 3px 0 0 13px;
    font-size: 14.300px;
    white-space: nowrap;
    color: #6f6f6f;
    border-right: 1px solid #333;
}

.proj-info {
    height: 144px;
    flex-shrink: 0;
    display: flex;
    padding: 13px 0 0 8px;
}

.thumb {
    width: 143px;
    height: 93px;
    padding: 2px 0 0 3px;
    background: #000;
}

.thumb-title {
    display: block;
    height: 18px;
    white-space: nowrap;
    font-weight: 700;
    font-size: 12.500px;
    line-height: 18px;
    color: #f2f2f2;
}

.thumb-pic {
    width: 139px;
    height: 73px;
}

.file-info {
    margin: -4px 0 0 7px;
    font-size: 13px;
    line-height: 16px;
    color: #9b9b9b;
}

.file-name {
    width: 333px;
    height: 18px;
    display: flex;
    align-items: center;
    white-space: nowrap;
    font-size: 14.500px;
    color: #9b9b9b;
}

.file-name b {
    color: #a6a6a6;
}

.file-name span {
    font-size: 14px;
}

.tri {
    width: 0;
    height: 0;
    margin: 0 5px 0 12px;
    border-style: solid;
    border-width: 6px 5px 0;
    border-color: #e6e6e6 transparent transparent;
    flex-shrink: 0;
}

.search-box {
    height: 24px;
    margin: 0 8px 0 9px;
    padding: 4px 0 0 8px;
    background: #141414;
    border: 1px solid #1d1d1d;
    border-radius: 3px;
    flex-shrink: 0;
}

.proj-head {
    height: 23px;
    margin: 8px 0 0 2px;
    flex-shrink: 0;
    display: grid;
    grid-template-columns: 19px 128px 26px 97px 60px 62px 97px;
    align-items: center;
    background: #303030;
    border-top: 2px solid #1a1a1a;
    font-size: 12px;
    color: #8a8a8a;
}

.proj-head span {
    height: 15px;
    padding-left: 7px;
    border-left: 1px solid #1d1d1d;
    line-height: 15px;
    position: relative;
}

.proj-head span:first-child {
    border-left: 0;
}

.sort {
    position: absolute;
    right: 6px;
    top: 4px;
    border-style: solid;
    border-width: 0 8px 6px;
    border-color: transparent transparent #2d8ceb;
}

.proj-body {
    display: flex;
    flex-shrink: 0;
    margin-top: 1px;
}

.proj-rows {
    width: 471px;
    padding-left: 2px;
}

.proj-row {
    height: 23.900px;
    display: grid;
    grid-template-columns: 20px 25px 102px 35px 155px 63px 69px;
    align-items: center;
    background: #252525;
    border-bottom: 1px solid #1e1e1e;
    font-size: 14.200px;
    color: #949494;
    white-space: nowrap;
}

.proj-row .chev {
    margin-left: 5px;
}

.proj-row .name {
    font-size: 14px;
    margin-right: 2px;
}

.proj-row .tc {
    font-size: 13.500px;
}

.proj-row em {
    font-style: italic;
}

.lab {
    width: 11px;
    height: 11px;
    margin-left: 7px;
}

.proj-row.selected {
    background: #333;
}

.proj-row.selected .name {
    margin-left: -4px;
    padding-left: 4px;
    height: 22px;
    line-height: 22px;
    background: #a0a0a0;
    color: #262626;
}

.flow-icon {
    margin: 5px 0 0 3px;
}

.proj-foot {
    margin-top: auto;
    height: 22px;
    display: flex;
    align-items: center;
    margin-left: 2px;
    width: 469px;
    padding-left: 4px;
    border-top: 1px solid #171717;
    flex-shrink: 0;
}

.proj-foot > svg:nth-child(2) { margin-left: 12px; }
.proj-foot > svg:nth-child(3) { margin-left: 12px; }
.proj-foot > svg:nth-child(4) { margin-left: 12px; }
.proj-foot > svg:nth-child(6) { margin-left: 10px; }

.bpc {
    width: 56px;
    height: 18px;
    margin-left: 10px;
    border: 1px solid #1d1d1d;
    border-radius: 2px;
    text-align: center;
    font-size: 12px;
    line-height: 17px;
    color: #828282;
}

.thumb-bar {
    width: 101px;
    height: 18px;
    margin-left: 10px;
    background: #333;
    border-radius: 9px;
}

/* timeline */
.timeline {
    flex: 1;
    min-height: 0;
    margin: 0 0 1px 1px;
    border: 2px solid #2a8be8;
    display: flex;
    flex-direction: column;
}

.tl-tabs {
    height: 30px;
    flex-shrink: 0;
    display: flex;
    align-items: center;
    padding: 0 3px 0 12px;
}

.tl-tab {
    width: 326px;
    height: 30px;
    display: flex;
    align-items: center;
    border-bottom: 2px solid #a8a8a8;
    flex-shrink: 0;
}

.close {
    width: 18px;
    color: #8a8a8a;
    font-size: 15px;
}

.tl-title {
    width: 258px;
    margin-left: 15px;
    font-size: 14.300px;
    color: #a4a4a4;
    white-space: nowrap;
}

.tl-tab .burger {
    margin-left: 11px;
}

.swatch.second {
    margin-left: 45px;
}

.tl-other {
    width: 31px;
    margin-left: 15px;
    color: #6f6f6f;
    border-right: 1px solid #333;
}

.tl-main {
    flex: 1;
    min-height: 0;
    display: flex;
}

.tl-left {
    width: 468px;
    flex-shrink: 0;
    display: flex;
    flex-direction: column;
    border-right: 1px solid #1b1b1b;
}

.tl-controls {
    height: 48px;
    flex-shrink: 0;
    display: flex;
    align-items: center;
}

.timecode {
    width: 131px;
    padding-left: 12px;
    display: flex;
    flex-direction: column;
}

.timecode strong {
    padding-left: 5px;
    font-size: 19px;
    line-height: 23px;
    color: #2d8ceb;
}

.timecode span {
    font-size: 12.500px;
    line-height: 15px;
    color: #1c5fa8;
    white-space: nowrap;
}

.tl-search {
    width: 127px;
    height: 24px;
    padding: 4px 0 0 8px;
    background: #171717;
    border-radius: 3px;
}

.tl-icons {
    display: flex;
    align-items: center;
    gap: 16px;
    margin-left: 22px;
}

.graph-ic {
    margin-left: 5px;
}

.tl-head {
    height: 23px;
    flex-shrink: 0;
    display: flex;
    align-items: center;
    background: #2f2f2f;
    border-bottom: 1px solid #171717;
    font-size: 12px;
    color: #8a8a8a;
}

.h-eye { margin-left: 6px; }
.h-audio { margin-left: 4px; }

.h-dot {
    width: 9px;
    height: 9px;
    margin-left: 7px;
    border-radius: 50%;
    background: #a8a8a8;
}

.h-lock { margin-left: 8px; }

.h-sep {
    width: 1px;
    height: 14px;
    background: #1b1b1b;
    flex-shrink: 0;
}

.h-sep.s1 { margin-left: 7px; }
.h-tag { margin-left: 17px; }
.h-sep.s2 { margin-left: 8px; }
.h-num { margin-left: 7px; width: 33px; }
.h-name { margin-left: 7px; width: 195px; letter-spacing: .2px; }
.h-mode { margin-left: 6px; }

.layer {
    height: 21.300px;
    flex-shrink: 0;
    display: flex;
    align-items: center;
    background: #272727;
    border-bottom: 1px solid #1d1d1d;
    color: #9d9d9d;
    white-space: nowrap;
}

.cell {
    width: 16px;
    height: 17px;
    background: #212121;
    display: flex;
    align-items: center;
    justify-content: center;
    flex-shrink: 0;
}

.cell.eye { margin-left: 4px; }
.cell.solo { margin-left: 22px; }
.cell.lock { margin-left: 2px; }

.twirl {
    margin-left: 16px;
    margin-right: 9px;
}

.twirl.open {
    margin-left: 14px;
    margin-right: 7px;
}

.label-box {
    width: 15px;
    height: 15px;
    flex-shrink: 0;
}

.num {
    width: 37px;
    margin-left: 9px;
    flex-shrink: 0;
    font-size: 13.500px;
    color: #9a9a9a;
}

.src {
    margin-right: 5px;
}

.src.cam {
    margin: 0 9px 0 1px;
}

.lname {
    flex: none;
    width: 175px;
    height: 100%;
    display: flex;
    align-items: center;
    font-size: 14px;
    letter-spacing: .35px;
    color: #a0a0a0;
}

.lname.boxed {
    width: 155px;
    margin-left: 6px;
}

.solid-box {
    width: 17px;
    height: 17px;
    margin: 0 5px 0 1px;
    background: #fff;
    border: 1px solid #111;
    flex-shrink: 0;
}

.fx-box {
    width: 16px;
    height: 16px;
    display: flex;
    align-items: center;
    justify-content: center;
    border: 1px solid #a0a0a0;
    flex-shrink: 0;
}

.src + .fx-box {
    margin-left: -2px;
}

.fx-box i {
    width: 7px;
    height: 7px;
    border-radius: 50%;
    background: #a8a8a8;
}

.fx-box.dark {
    background: #555;
    border-color: #888;
}

.fx-box.dark i {
    background: #222;
    width: 8px;
    height: 8px;
}

.mode {
    width: 85px;
    height: 17px;
    margin-left: 5px;
    padding: 0 7px 0 8px;
    display: flex;
    align-items: center;
    justify-content: space-between;
    flex-shrink: 0;
    background: #1b1b1b;
    color: #a4aeb8;
    font-size: 14.500px;
}

.mini {
    width: 4px;
    height: 17px;
    margin-left: 7px;
    background: #1f1f1f;
}

.layer.prop {
    background: #232323;
}

.stopwatch {
    margin-left: 150px;
}

.pname {
    margin-left: 10px;
}

.layer.selected {
    background: #3b3b3b;
}

.layer.selected .cell {
    background: #333;
}

.layer.selected .src {
    margin-right: 1px;
}

.layer.selected .lname {
    width: 179px;
    padding-left: 4px;
    background: #a2a2a2;
    color: #222;
}

.tl-empty {
    flex: 1;
}

.tl-foot {
    height: 21px;
    flex-shrink: 0;
    display: flex;
    align-items: center;
    gap: 8px;
    padding-left: 6px;
    border-top: 1px solid #1a1a1a;
}

.tl-strip {
    flex: 1;
    padding: 48px 0 0 5px;
}

.strip-2 {
    margin-top: 7px;
}

/* composition */
.comp {
    width: 1139px;
    margin: 0 8px 0 6px;
    display: flex;
    flex-direction: column;
    flex-shrink: 0;
}

.comp-tabs {
    height: 32px;
    flex-shrink: 0;
    display: flex;
    align-items: center;
    padding-left: 14px;
}

.comp-tab {
    width: 428px;
    height: 32px;
    display: flex;
    align-items: center;
    padding-top: 2px;
    border-bottom: 2px solid #a8a8a8;
}

.lock-ic {
    margin-left: 13px;
}

.ct-label {
    margin-left: 10px;
    font-size: 14.300px;
    color: #c4c4c4;
    white-space: nowrap;
}

.comp-tab .burger {
    margin-left: auto;
}

.ct-dim {
    margin-top: 2px;
    color: #777;
}

.layer-tab {
    margin-left: 46px;
    width: 173px;
}

.crumbs {
    height: 35px;
    flex-shrink: 0;
    display: flex;
    align-items: center;
    padding-left: 25px;
    border-bottom: 2px solid #151515;
    font-size: 14.300px;
}

.crumb {
    white-space: nowrap;
    color: #858585;
}

.crumb.active {
    width: 296px;
    height: 22px;
    margin-right: 13px;
    padding-left: 11px;
    display: flex;
    align-items: center;
    justify-content: space-between;
    padding-right: 9px;
    background: #1a1a1a;
    color: #2d8ceb;
}

.viewer {
    position: relative;
    flex: 1;
    min-height: 0;
    display: flex;
    justify-content: center;
    padding: 128px 0 0 1px;
}

.view-label {
    position: absolute;
    left: 10px;
    top: 11px;
    font-size: 14px;
    font-weight: 700;
    letter-spacing: -.3px;
    color: #e6e6e6;
}

.video {
    position: relative;
    width: 960px;
    height: 540px;
    background: #000;
}

.bars-top, .bars-mid {
    display: grid;
    grid-template-columns: repeat(7, 1fr);
}

.bars-top {
    height: 360px;
}

.bars-mid {
    height: 45px;
}

.c-gray { background: #ccc; }
.c-yellow { background: #ff0; }
.c-cyan { background: #0ff; }
.c-green { background: #0f0; }
.c-magenta { background: #f0f; }
.c-red { background: #f00; }
.c-blue { background: #00f; }
.c-black { background: #131313; }

.ramps {
    height: 67px;
    display: flex;
}

.ramp-a {
    width: 576px;
    background: linear-gradient(to right, #fff, #000);
}

.ramp-b {
    flex: 1;
    background: linear-gradient(to right, #fff, #000);
}

.steps {
    height: 68px;
    width: 548.570px;
    display: grid;
    grid-template-columns: repeat(12, 1fr);
}

.s1 { background: #000; }
.s2 { background: #161616; }
.s3 { background: #2e2e2e; }
.s4 { background: #454545; }
.s5 { background: #5c5c5c; }
.s6 { background: #737373; }
.s7 { background: #8a8a8a; }
.s8 { background: #a2a2a2; }
.s9 { background: #b9b9b9; }
.s10 { background: #d0d0d0; }
.s11 { background: #e7e7e7; }
.s12 { background: #fff; }

.video-title {
    position: absolute;
    left: 0;
    top: 0;
    height: 28px;
    width: 369px;
    padding-left: 2px;
    background: #000;
    color: #fff;
    font-size: 18.200px;
    line-height: 29px;
    white-space: nowrap;
}

.handle {
    position: absolute;
    width: 9px;
    height: 9px;
    margin: -4px 0 0 -4px;
    background: #a9cfcb;
}

.handle.tl { left: 0; top: 0; }
.handle.tc { left: 480px; top: 0; }
.handle.tr { left: 960px; top: 0; }
.handle.ml { left: 0; top: 270px; }
.handle.mr { left: 960px; top: 270px; }
.handle.bl { left: 0; top: 540px; }
.handle.bc { left: 480px; top: 540px; }
.handle.br { left: 960px; top: 540px; }

.anchor {
    position: absolute;
    left: 469px;
    top: 259px;
}

.comp-foot {
    height: 26px;
    margin-bottom: 3px;
    flex-shrink: 0;
    display: flex;
    align-items: center;
    padding-left: 2px;
    font-size: 14px;
    color: #8f8f8f;
}

.drop {
    height: 22px;
    display: flex;
    align-items: center;
    justify-content: space-between;
    padding: 0 7px 0 8px;
    background: #1e1e1e;
    border-radius: 3px;
    white-space: nowrap;
    flex-shrink: 0;
}

.w-zoom { width: 85px; margin-right: 3px; }
.w-res { width: 106px; }
.w-3d { width: 107px; }
.w-cam { width: 131px; margin: 0 2px 0 3px; }
.w-view { width: 85px; }

.vbtn {
    width: 23px;
    height: 24px;
    display: flex;
    align-items: center;
    justify-content: center;
    flex-shrink: 0;
    margin-right: 4px;
    border-radius: 3px;
}

.w-res + .vbtn { margin-left: 5px; }

.vbtn.on {
    background: #161616;
}

.fsep {
    width: 1px;
    height: 22px;
    margin: 0 3px;
    background: #303030;
}

.fsep.wide {
    margin-right: 12px;
}

.exposure {
    width: 28px;
}

.tc-box {
    width: 87px;
    height: 22px;
    text-align: center;
    line-height: 21px;
    border: 1px solid #2e2e2e;
    border-radius: 3px;
    color: #808080;
    flex-shrink: 0;
}

.draft {
    width: 97px;
    height: 22px;
    margin-left: 95px;
    padding-left: 9px;
    display: flex;
    align-items: center;
    gap: 9px;
    border: 1px solid #2e2e2e;
    border-radius: 3px;
    color: #7d7d7d;
    flex-shrink: 0;
}

.floor {
    margin: 0 5px 0 6px;
}

/* right side */
.side {
    flex: 1;
    display: flex;
    flex-direction: column;
}

.side-item {
    height: 38px;
    flex-shrink: 0;
    padding: 9px 0 0 14px;
    margin-right: 17px;
    border-bottom: 3px solid #191919;
    color: #8f8f8f;
}

.char {
    height: 378.500px;
    flex-shrink: 0;
    padding: 9px 8px 0 5px;
    margin-right: 17px;
    border-bottom: 3px solid #191919;
}

.char-title {
    display: flex;
    align-items: center;
    justify-content: space-between;
    padding: 0 5px 0 10px;
    height: 18px;
    color: #9ba5ad;
}

.font-block {
    display: flex;
    margin-top: 18px;
    height: 53px;
}

.font-drops {
    width: 153px;
    display: flex;
    flex-direction: column;
    gap: 6px;
}

.font-drop {
    height: 23.500px;
    display: flex;
    align-items: center;
    padding: 0 7px 0 10px;
    background: #1a1a1a;
    border: 1px solid #2a2a2a;
    border-radius: 3px;
    color: #b4b4b4;
    white-space: nowrap;
    font-size: 13.500px;
}

.font-drop span {
    flex: 1;
}

.font-drop i {
    width: 1px;
    height: 22px;
    margin-right: 6px;
    background: #2c2c2c;
}

.color-tools {
    position: relative;
    flex: 1;
}

.dropper {
    position: absolute;
    left: 8px;
    top: 4px;
}

.mini-swap {
    position: absolute;
    left: 6px;
    top: 32px;
    width: 25px;
    height: 21px;
    border: 2px solid #999;
    background: #fff;
}

.mini-swap i {
    display: block;
    height: 8px;
    background: #000;
}

.fill-stroke {
    position: absolute;
    left: 37px;
    top: 0;
    width: 54px;
    height: 53px;
}

.fill {
    position: absolute;
    left: 0;
    top: 0;
    width: 38px;
    height: 38px;
    background: #fff;
    border: 2px solid #000;
}

.stroke {
    position: absolute;
    right: 0;
    bottom: 0;
    width: 37px;
    height: 36px;
    background: #fff;
    border: 1px solid #000;
}

.slash {
    position: absolute;
    right: 0;
    bottom: 0;
}

.swap {
    position: absolute;
    right: 0;
    top: 4px;
}

.none-box {
    position: absolute;
    left: 1px;
    bottom: 0;
    width: 15px;
    height: 15px;
    background: linear-gradient(135deg, #fff 46%, #e04040 46% 54%, #fff 54%);
    border: 1px solid #999;
}

.char-rows {
    margin-top: 8px;
    padding-top: 3px;
    border-top: 1px solid #303030;
}

.cr {
    height: 25px;
    display: flex;
    align-items: center;
    position: relative;
    color: #8a8a8a;
}

.t-ic {
    width: 25px;
    flex-shrink: 0;
    font-family: "Liberation Serif", serif;
    font-weight: 700;
    color: #a8a8a8;
    line-height: 1;
    text-align: center;
}

.col-2 {
    margin-left: 35px;
}

.stack {
    display: flex;
    flex-direction: column;
    align-items: center;
}

.big-small {
    font-size: 26px;
    white-space: nowrap;
}

.big-small small {
    font-size: 15px;
}

.v {
    width: 56px;
    margin-left: 5px;
    white-space: nowrap;
}

.tri.g {
    margin: 0;
    border-width: 7px 4px 0;
    border-color: #8a8a8a transparent transparent;
}

.tri.end {
    position: absolute;
    right: 7px;
}

.leading {
    display: flex;
    align-items: center;
    gap: 1px;
    font-size: 12px;
    line-height: 11px;
    font-weight: 400;
}

.leading u, .leading span {
    text-decoration: underline;
}

.v.r {
    margin-left: 18px;
    width: auto;
}

.va {
    font-size: 15px;
    font-weight: 400;
    font-family: "Lato", sans-serif;
    letter-spacing: -1px;
}

.v.off {
    color: #4a4a4a;
}

.va-box {
    width: 24px;
    height: 15px;
    background: #a8a8a8;
    color: #232323;
    font-family: "Lato", sans-serif;
    font-weight: 900;
    font-size: 13.500px;
    line-height: 15px;
}

.stroke-ic {
    margin: 0 4px 0 2px;
}

.stroke-drop {
    width: 142px;
    height: 24px;
    margin-left: 8px;
    padding-right: 8px;
    display: flex;
    align-items: center;
    justify-content: flex-end;
    background: #1b1b1b;
    border: 1px solid #2a2a2a;
    border-radius: 3px;
}

.char-rows.single {
    margin-top: 7.500px;
    padding-top: 5.500px;
}

.char-rows.tall {
    margin-top: 7.500px;
    padding-top: 2.500px;
}

.char-rows.tall .cr {
    height: 27px;
}

.vscale {
    display: flex;
    align-items: center;
    justify-content: center;
    font-size: 25px;
}

.hscale {
    font-size: 24px;
}

.base {
    display: flex;
    align-items: flex-end;
    justify-content: center;
    font-family: "Lato", sans-serif;
    font-size: 16px;
    font-weight: 400;
}

.base-a {
    display: flex;
    flex-direction: column;
    align-items: center;
    font-size: 9px;
}

.tsume {
    font-family: "Noto Sans CJK JP", sans-serif;
    font-size: 15px;
    font-weight: 400;
}

.styles {
    height: 39px;
    margin-top: 7.500px;
    display: flex;
    align-items: center;
    padding-left: 33px;
    border-top: 1px solid #303030;
    font-family: "Liberation Serif", serif;
    font-size: 19px;
    color: #a8a8a8;
}

.styles > * {
    width: 23px;
    text-align: center;
    white-space: nowrap;
    flex-shrink: 0;
}

.styles b {
    width: 16px;
    font-size: 22px;
}

.styles em {
    width: 14px;
    margin-left: 16px;
    font-style: italic;
    font-size: 21px;
}

.styles span:nth-of-type(1) { margin-left: 19px; }
.styles span:nth-of-type(2) { margin-left: 8px; }
.styles span:nth-of-type(3) { margin-left: 17px; }
.styles span:nth-of-type(4) { margin-left: 8px; width: 18px; }

.styles small {
    font-size: 13px;
}

.styles sup, .styles sub {
    font-size: 9px;
    line-height: 0;
}

.checks {
    display: flex;
    align-items: center;
    height: 26px;
    margin-top: 2px;
    padding-left: 8px;
}

.checks .check {
    margin-left: 0;
}

.checks .check.second {
    margin-left: 44px;
}

.ck-label {
    margin-left: 6px;
    color: #7d7d7d;
    width: 56px;
    white-space: nowrap;
}

/* taskbar */
.taskbar {
    height: 60px;
    flex-shrink: 0;
    display: flex;
    align-items: center;
    background: linear-gradient(to right, #251e3a, #1b1b30 35%, #181a2c);
    border-top: 1px solid #2b2b3c;
    color: #fff;
    font-family: "Open Sans", sans-serif;
}

.weather {
    position: relative;
    width: 28px;
    height: 32px;
    margin: 4px 0 0 14px;
    flex-shrink: 0;
}

.wx-badge {
    position: absolute;
    left: 14px;
    top: -8px;
    width: 19px;
    height: 19px;
    border-radius: 50%;
    background: #f4a3ab;
    color: #222;
    font-size: 12px;
    line-height: 19px;
    text-align: center;
}

.winlogo {
    margin-left: 118px;
}

.search-pill {
    width: 275px;
    height: 39px;
    margin-left: 16px;
    padding-left: 15px;
    display: flex;
    align-items: center;
    border-radius: 20px;
    background: #3c3e52;
    color: #d8d8d8;
    font-size: 16px;
    flex-shrink: 0;
}

.search-pill span {
    margin-left: 11px;
}

.pill-art {
    margin-left: auto;
    margin-right: 6px;
}

.apps {
    display: flex;
    margin-left: 2px;
}

.app {
    position: relative;
    width: 55px;
    height: 60px;
    display: flex;
    align-items: center;
    justify-content: center;
}

.app.dotted::after {
    content: "";
    position: absolute;
    bottom: 5px;
    left: 25px;
    width: 5px;
    height: 5px;
    border-radius: 50%;
    background: #8a8a8a;
}

.app.current::before {
    content: "";
    position: absolute;
    left: 2px;
    right: 3px;
    top: 5px;
    bottom: 5px;
    border-radius: 5px;
    background: rgba(255, 255, 255, .07);
}

.app.current::after {
    content: "";
    position: absolute;
    bottom: 7px;
    left: 18px;
    width: 18px;
    height: 4px;
    border-radius: 2px;
    background: #5fc8ff;
}

.tile {
    position: relative;
    width: 28px;
    height: 32px;
    border-radius: 4px;
    text-align: center;
    font-weight: 700;
    font-size: 17px;
    line-height: 32px;
}

.ae { background: #00005b; color: #9999ff; }
.ai { background: #330000; color: #ff9a00; }
.ps { background: #001e36; color: #31a8ff; }
.pr { background: #00005b; color: #9999ff; }

.key-glyph {
    font-size: 9px;
    fill: #c02020;
    text-anchor: middle;
}

.maya-text {
    font-size: 6px;
    fill: #12a5a0;
    text-anchor: middle;
}

.tray {
    display: flex;
    align-items: center;
    margin-left: 28px;
    font-size: 14px;
}

.tr-cloud { margin-left: 25px; }
.tr-lang { margin-left: 25px; width: 29px; font-size: 13.500px; }
.tr-wifi { margin-left: 22px; }
.tr-sound { margin-left: 15px; }
.tr-batt { margin-left: 5px; }

.clock {
    width: 97px;
    display: flex;
    flex-direction: column;
    align-items: flex-end;
    gap: 1px;
    font-size: 14.400px;
    line-height: 19px;
    white-space: nowrap;
}

.notif {
    width: 20px;
    height: 20px;
    margin-left: 15px;
    border-radius: 50%;
    background: #3fb2f0;
    color: #14243a;
    font-size: 12px;
    line-height: 20px;
    text-align: center;
}
```
